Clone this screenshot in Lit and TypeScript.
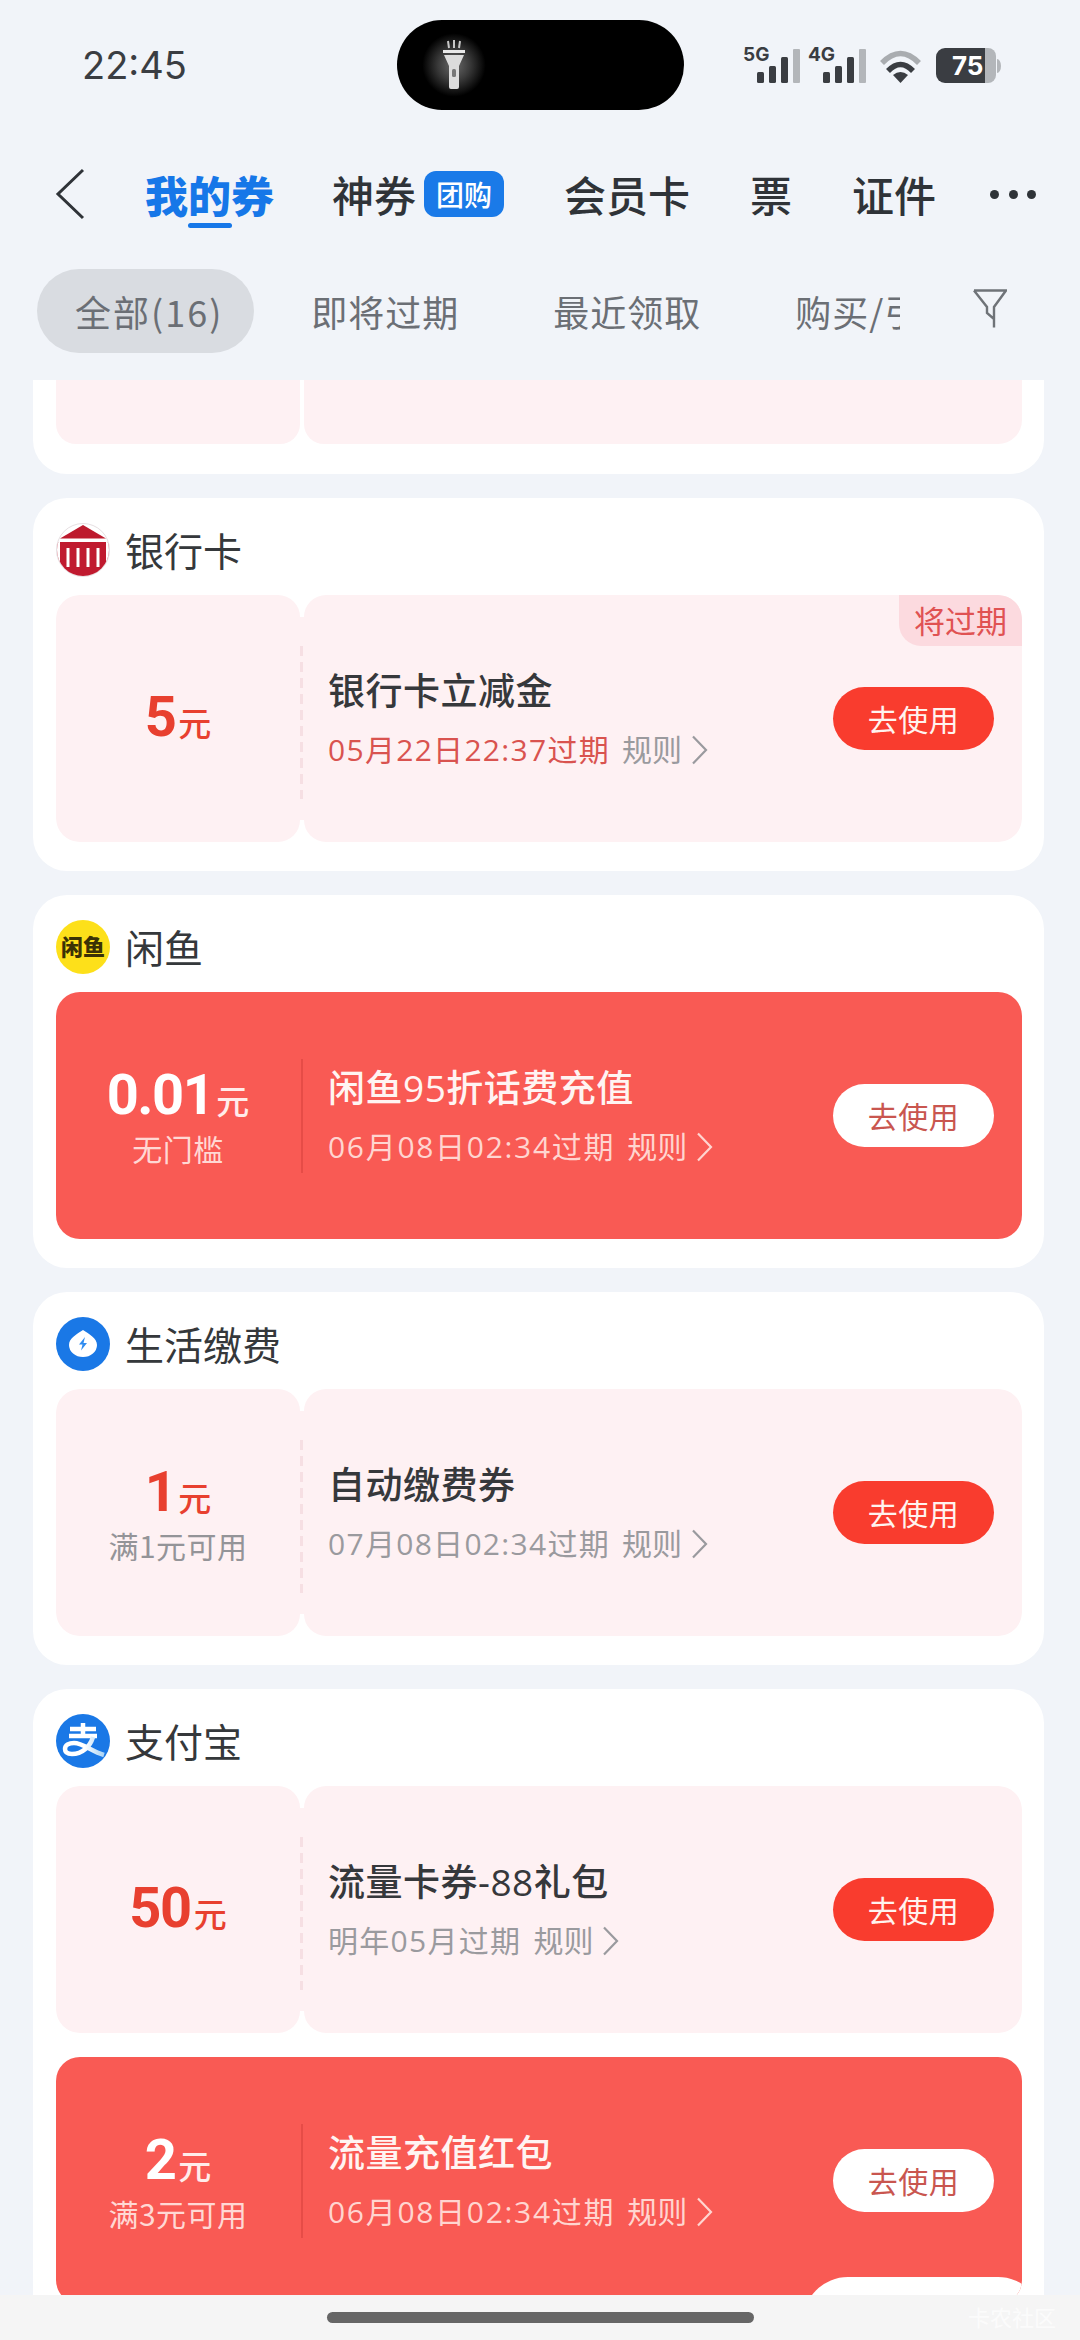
import { LitElement, html, css, svg } from "lit";
import { customElement } from "lit/decorators.js";

type Coupon = {
  amount: string;
  sub?: string;
  title: string;
  date: string;
  hot?: boolean;
  soon?: boolean;
  overlay?: boolean;
};
type Group = { name: string; icon: string; coupons: Coupon[] };

const groups: Group[] = [
  {
    name: "银行卡",
    icon: "bank",
    coupons: [{ amount: "5", title: "银行卡立减金", date: "05月22日22:37过期", soon: true }],
  },
  {
    name: "闲鱼",
    icon: "fish",
    coupons: [{ amount: "0.01", sub: "无门槛", title: "闲鱼95折话费充值", date: "06月08日02:34过期", hot: true }],
  },
  {
    name: "生活缴费",
    icon: "bolt",
    coupons: [{ amount: "1", sub: "满1元可用", title: "自动缴费券", date: "07月08日02:34过期" }],
  },
  {
    name: "支付宝",
    icon: "ali",
    coupons: [
      { amount: "50", title: "流量卡券-88礼包", date: "明年05月过期" },
      { amount: "2", sub: "满3元可用", title: "流量充值红包", date: "06月08日02:34过期", hot: true, overlay: true },
    ],
  },
];

const icons: Record<string, unknown> = {
  bank: svg`<svg viewBox="0 0 54 54" width="54" height="54">
    <defs><clipPath id="bc"><circle cx="27" cy="27" r="26"/></clipPath></defs>
    <circle cx="27" cy="27" r="26.500" fill="#fff" stroke="#e6dfe2"/>
    <g clip-path="url(#bc)">
      <path d="M27 2 L50 15.500 H4Z" fill="#bd1a2d"/>
      <rect x="0" y="19" width="54" height="35" fill="#c01a2f"/>
      <path d="M10.500 25h3v19h-3zM20.500 25h3v19h-3zM30.500 25h3v19h-3zM40.500 25h3v19h-3z" fill="#fff"/>
      <path d="M0 19h4v26H0zM50 19h4v26h-4z" fill="#fff"/>
    </g>
  </svg>`,
  fish: svg`<svg viewBox="0 0 54 54" width="54" height="54">
    <circle cx="27" cy="27" r="27" fill="#fde01a"/>
    <text x="27" y="35" text-anchor="middle" font-family="Noto Sans CJK SC, sans-serif" font-weight="900" font-size="22" fill="#3b3205">闲鱼</text>
  </svg>`,
  bolt: svg`<svg viewBox="0 0 54 54" width="54" height="54">
    <circle cx="27" cy="27" r="27" fill="#1a78e6"/>
    <path d="M27 13c6 4 14 8 14 15a14 12 0 0 1-28 0c0-7 8-11 14-15z" fill="#fff"/>
    <path d="M29 20l-6 7.500h3.500l-1.500 6 6-7.500h-3.500z" fill="#2f8cf0"/>
  </svg>`,
  ali: svg`<svg viewBox="0 0 54 54" width="54" height="54">
    <defs><linearGradient id="ag" x1="0" x2="1"><stop offset="0.500" stop-color="#fff"/><stop offset="1" stop-color="#a9d3f5"/></linearGradient></defs>
    <circle cx="27" cy="27" r="27" fill="#1a78e6"/>
    <path d="M14 15h26M27 9v13M13 22h28" stroke="#fff" stroke-width="4.500" fill="none"/>
    <path d="M37 23c-3 10-11 17-21 17-5 0-7-2-7-5 0-4 4-6 9-6 9 0 17 8 30 12" stroke="url(#ag)" stroke-width="4.500" fill="none"/>
  </svg>`,
};

@customElement("app-root")
export class AppRoot extends LitElement {
  static styles = css`
    :host {
      display: flex;
      flex-direction: column;
      width: 1080px;
      height: 2340px;
      overflow: hidden;
      background: #f1f4f9;
      font-family: "Noto Sans CJK SC", "Noto Sans", sans-serif;
      color: #33363a;
    }
    .status {
      flex: none;
      height: 130px;
      display: flex;
      align-items: flex-start;
      padding-top: 20px;
      box-sizing: border-box;
    }
    .time {
      width: 397px;
      padding-left: 82px;
      box-sizing: border-box;
      font: 400 38px/90px Inter, Roboto, sans-serif;
      color: #3a3d42;
    }
    .island {
      width: 287px;
      height: 90px;
      border-radius: 45px;
      background: #000;
      display: flex;
      align-items: center;
      padding-left: 25px;
      box-sizing: border-box;
    }
    .torch {
      width: 64px;
      height: 64px;
      background: radial-gradient(circle, #6a6a6a 0%, #3a3a3a 35%, #000 70%);
      border-radius: 50%;
    }
    .sys {
      margin-left: 58px;
      margin-top: 20px;
    }
    .nav {
      flex: none;
      height: 130px;
      padding-left: 55px;
      display: flex;
      align-items: center;
      gap: 60px;
      box-sizing: border-box;
      margin-top: -1px;
    }
    .back {
      width: 30px;
      height: 52px;
      flex: none;
    }
    .tab {
      position: relative;
      font-size: 42px;
      line-height: 56px;
      font-weight: 500;
      white-space: nowrap;
      display: flex;
      align-items: center;
      color: #2f3338;
    }
    .tab.on {
      color: #1677e8;
      font-weight: 900;
      font-size: 43px;
      margin-right: -2px;
    }
    .tab.on::after {
      content: "";
      position: absolute;
      left: 43px;
      bottom: -6px;
      width: 44px;
      height: 5px;
      border-radius: 3px;
      background: #1677e8;
    }
    .badge {
      margin-left: 8px;
      width: 80px;
      height: 46px;
      border-radius: 12px;
      background: #1a7ae8;
      color: #fff;
      font-size: 28px;
      line-height: 46px;
      font-weight: 500;
      text-align: center;
    }
    .dots {
      margin-left: -6px;
      display: flex;
      gap: 9.500px;
    }
    .dots i {
      width: 9px;
      height: 9px;
      border-radius: 50%;
      background: #2f3338;
    }
    .filters {
      flex: none;
      height: 121px;
      display: flex;
      padding: 10px 37px 27px;
      box-sizing: border-box;
      align-items: center;
    }
    .strip {
      flex: none;
      width: 863px;
      overflow: hidden;
      display: flex;
      font-size: 36px;
      line-height: 84px;
      letter-spacing: 1px;
      color: #6b6f75;
      white-space: nowrap;
    }
    .strip span {
      flex: none;
      padding: 0 47px;
    }
    .strip span.on {
      padding: 0 31px 0 38px;
      margin-right: 10px;
      background: #d9dce1;
      border-radius: 42px;
      letter-spacing: 2px;
    }
    .funnel {
      margin-left: 73px;
      margin-top: -5px;
      flex: none;
    }
    .scroll {
      flex: 1;
      min-height: 0;
      overflow: hidden;
      display: flex;
      flex-direction: column;
      gap: 24px;
      padding: 0 36px 0 33px;
    }
    .card {
      flex: none;
      background: #fff;
      border-radius: 34px;
      padding: 25px 22px 29px 23px;
    }
    .card.cut {
      border-radius: 0 0 34px 34px;
      padding-top: 0;
      padding-bottom: 30px;
    }
    .head {
      height: 54px;
      display: flex;
      align-items: center;
      gap: 15px;
      margin-bottom: 18px;
      font-size: 39px;
      line-height: 54px;
      color: #35383b;
    }
    .head span {
      margin-top: -3px;
    }
    .head svg {
      display: block;
      flex: none;
    }
    .list {
      display: flex;
      flex-direction: column;
      gap: 24px;
    }
    .coupon {
      position: relative;
      display: flex;
      height: 247px;
      gap: 4px;
      overflow: hidden;
      border-radius: 24px;
    }
    .stub {
      height: 64px;
      display: flex;
      gap: 4px;
    }
    .stub div {
      background: #fef1f3;
    }
    .stub .l {
      width: 244px;
      border-radius: 0 0 20px 20px;
    }
    .stub .r {
      flex: 1;
      border-radius: 0 0 24px 20px;
    }
    .left {
      flex: none;
      width: 244px;
      background: #fef1f3;
      border-radius: 22px;
      display: flex;
      flex-direction: column;
      align-items: center;
      justify-content: center;
    }
    .right {
      position: relative;
      flex: 1;
      background: #fef1f3;
      border-radius: 22px;
      display: flex;
      align-items: center;
      padding: 0 28px 0 24px;
    }
    .coupon::before {
      content: "";
      position: absolute;
      left: 238px;
      width: 16px;
      top: 22px;
      bottom: 22px;
      background: #fef1f3;
    }
    .coupon::after {
      content: "";
      position: absolute;
      left: 244px;
      top: 51px;
      width: 3px;
      height: 153px;
      background: repeating-linear-gradient(to bottom, #f6dfe3 0 10px, transparent 10px 16px);
    }
    .coupon.hot {
      background: #f95a54;
    }
    .coupon.hot::before {
      display: none;
    }
    .coupon.hot .left,
    .coupon.hot .right {
      background: none;
    }
    .coupon.hot::after {
      top: 67px;
      height: 114px;
      width: 2px;
      left: 245px;
      background: #e64c47;
    }
    .amt {
      display: flex;
      align-items: baseline;
      color: #e8402f;
      font-family: Roboto, "Noto Sans CJK SC", sans-serif;
      font-weight: 700;
      font-size: 56px;
      line-height: 62px;
      letter-spacing: -1.500px;
      margin-top: 2px;
    }
    .amt small {
      font-family: "Noto Sans CJK SC", sans-serif;
      font-size: 33px;
      font-weight: 500;
      letter-spacing: 0;
      margin-left: 3px;
    }
    .hot .amt {
      color: #fff;
    }
    .hot .amt small {
      color: #ffecea;
    }
    .sub {
      font-size: 30px;
      line-height: 44px;
      letter-spacing: 0.500px;
      margin-top: -5px;
      color: #949498;
      white-space: nowrap;
    }
    .hot .sub {
      color: #ffd8d4;
    }
    .info {
      flex: 1;
      min-width: 0;
    }
    .title {
      font-family: "Open Sans", "Noto Sans CJK SC", sans-serif;
      font-size: 37px;
      line-height: 50px;
      font-weight: 500;
      letter-spacing: 0.500px;
      color: #36383b;
      white-space: nowrap;
    }
    .hot .title {
      color: #fff4f2;
    }
    .date {
      margin-top: 12px;
      display: flex;
      align-items: center;
      font-family: "Open Sans", "Noto Sans CJK SC", sans-serif;
      font-size: 30px;
      line-height: 44px;
      letter-spacing: 1.300px;
      white-space: nowrap;
      color: #9a9a9e;
    }
    .date.soon {
      color: #d9534f;
    }
    .hot .date {
      letter-spacing: 1.700px;
    }
    .hot .date,
    .hot .rule {
      color: #ffd5d0;
    }
    .rule {
      margin-left: 12px;
      display: flex;
      align-items: center;
      gap: 9px;
      color: #9a9a9e;
      letter-spacing: 0;
    }
    .hot .rule {
      letter-spacing: 0;
    }
    .btn {
      flex: none;
      width: 161px;
      height: 63px;
      border-radius: 32px;
      background: #f93c2e;
      color: #fff3ef;
      font-size: 30px;
      line-height: 63px;
      text-align: center;
      letter-spacing: 0.500px;
    }
    .hot .btn {
      background: #fff;
      color: #c9564f;
    }
    .tag {
      position: absolute;
      top: 0;
      right: 0;
      width: 123px;
      height: 51px;
      background: #fcdadf;
      border-radius: 0 22px 0 22px;
      color: #e05252;
      font-size: 31px;
      line-height: 50px;
      text-align: center;
    }
    .float {
      position: absolute;
      left: 747px;
      top: 220px;
      width: 240px;
      height: 90px;
      border-radius: 50px;
      background: #fff;
    }
    .foot {
      flex: none;
      position: relative;
      height: 45px;
      background: #f5f5f5;
      display: flex;
      justify-content: flex-start;
      padding: 17px 0 0 327px;
      box-sizing: border-box;
    }
    .home {
      width: 427px;
      height: 11px;
      border-radius: 6px;
      background: #666;
    }
    .mark {
      position: absolute;
      right: 24px;
      top: 7px;
      font-size: 22px;
      line-height: 28px;
      color: rgba(255, 255, 255, 0.7);
    }
  `;

  private chevron(color: string) {
    return html`<svg width="17" height="30" viewBox="0 0 17 30" fill="none">
      <path d="M2 1.500 L15 15 L2 28.500" stroke=${color} stroke-width="2.200"/>
    </svg>`;
  }

  private coupon(c: Coupon) {
    const cls = `coupon ${c.hot ? "hot" : ""}`;
    return html`<div class=${cls}>
      <div class="left">
        <div class="amt">${c.amount}<small>元</small></div>
        ${c.sub ? html`<div class="sub">${c.sub}</div>` : ""}
      </div>
      <div class="right">
        <div class="info">
          <div class="title">${c.title}</div>
          <div class="date ${c.soon ? "soon" : ""}">
            ${c.date}
            <span class="rule">规则 ${this.chevron(c.hot ? "#ffd5d0" : "#9a9a9e")}</span>
          </div>
        </div>
        <div class="btn">去使用</div>
        ${c.soon ? html`<div class="tag">将过期</div>` : ""}
      </div>
      ${c.overlay ? html`<div class="float"></div>` : ""}
    </div>`;
  }

  render() {
    return html`
      <div class="status">
        <div class="time">22:45</div>
        <div class="island">
          <div class="torch">
            <svg width="64" height="64" viewBox="0 0 64 64">
              <path d="M26 8l1 7M32 7v8M38 8l-1 7" stroke="#c9c9c9" stroke-width="2"/>
              <path d="M21 17h22v3H21z" fill="#e8e8e8"/>
              <path d="M22 22h20l-5 11v21a2 2 0 0 1-2 2h-6a2 2 0 0 1-2-2V33z" fill="#dcdcdc"/>
              <rect x="30" y="36" width="4" height="8" rx="1.500" fill="#777"/>
            </svg>
          </div>
        </div>
        <svg class="sys" width="262" height="48" viewBox="0 0 262 48">
          <g font-family="Inter, Roboto, sans-serif" font-weight="700" font-size="19" fill="#3a3d42">
            <text x="1" y="21">5G</text>
            <text x="66" y="21">4G</text>
          </g>
          <g fill="#3a3d42">
            <rect x="15" y="32" width="7" height="11" rx="1.500"/>
            <rect x="27" y="26" width="7" height="17" rx="1.500"/>
            <rect x="39" y="17" width="7" height="26" rx="1.500"/>
            <rect x="81" y="32" width="7" height="11" rx="1.500"/>
            <rect x="93" y="26" width="7" height="17" rx="1.500"/>
            <rect x="105" y="17" width="7" height="26" rx="1.500"/>
          </g>
          <rect x="51" y="9" width="7" height="34" rx="1" fill="#b3b6ba"/>
          <rect x="117" y="9" width="7" height="34" rx="1" fill="#b3b6ba"/>
          <path d="M140 23 Q158.500 4 177 23" stroke="#a9acb0" stroke-width="5.500" fill="none"/>
          <path d="M146 31 Q158.500 18 171 31" stroke="#3a3d42" stroke-width="5.500" fill="none"/>
          <path d="M151 35 Q158.500 29 166 35 L158.500 43Z" fill="#3a3d42"/>
          <path d="M194 17a9 9 0 0 1 9-9h40v35h-40a9 9 0 0 1-9-9z" fill="#3a3d42"/>
          <path d="M243 8h3a8 8 0 0 1 8 8v19a8 8 0 0 1-8 8h-3z" fill="#b3b6ba"/>
          <path d="M255 19a4 7 0 0 1 0 14z" fill="#b3b6ba"/>
          <text x="210" y="35" font-family="Inter, Roboto, sans-serif" font-weight="700" font-size="26" fill="#fff">75</text>
        </svg>
      </div>
      <div class="nav">
        <svg class="back" viewBox="0 0 30 52" fill="none">
          <path d="M28 2 L3 26 L28 50" stroke="#2f3338" stroke-width="3"/>
        </svg>
        <div class="tab on">我的券</div>
        <div class="tab">神券<span class="badge">团购</span></div>
        <div class="tab">会员卡</div>
        <div class="tab">票</div>
        <div class="tab">证件</div>
        <div class="dots"><i></i><i></i><i></i></div>
      </div>
      <div class="filters">
        <div class="strip">
          <span class="on">全部(16)</span>
          <span>即将过期</span>
          <span>最近领取</span>
          <span>购买/引入</span>
        </div>
        <svg class="funnel" width="34" height="40" viewBox="0 0 34 40" fill="none">
          <path d="M1 1.500H33L21 18V38.500M21 30l-7-6V18L1 1.500" stroke="#6f7378" stroke-width="2.400"/>
        </svg>
      </div>
      <div class="scroll">
        <div class="card cut">
          <div class="stub"><div class="l"></div><div class="r"></div></div>
        </div>
        ${groups.map(
          (g) => html`<div class="card">
            <div class="head">${icons[g.icon]}<span>${g.name}</span></div>
            <div class="list">${g.coupons.map((c) => this.coupon(c))}</div>
          </div>`
        )}
      </div>
      <div class="foot">
        <div class="home"></div>
        <div class="mark">卡农社区</div>
      </div>
    `;
  }
}
